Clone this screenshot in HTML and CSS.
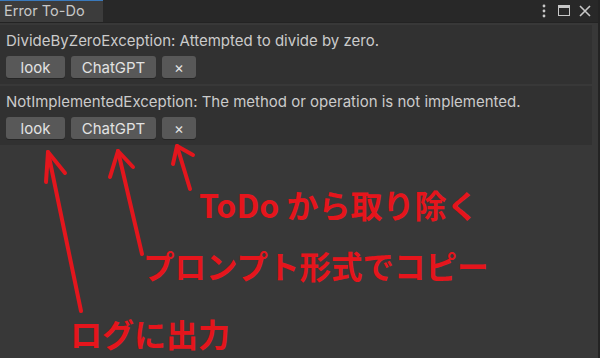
FILE: index.html
```html
<!DOCTYPE html>
<html lang="ja">
<head>
<meta charset="utf-8">
<link rel="stylesheet" href="styles.css">
</head>
<body>
<div class="window">
  <div class="titlebar">
    <div class="tab">Error To-Do</div>
    <div class="spacer"></div>
    <div class="win-icons">
      <svg class="ico" width="12" height="14" viewBox="0 0 12 14"><circle cx="6" cy="2" r="1.4" fill="#c8c8c8"/><circle cx="6" cy="7" r="1.4" fill="#c8c8c8"/><circle cx="6" cy="12" r="1.4" fill="#c8c8c8"/></svg>
      <svg class="ico" width="13" height="12" viewBox="0 0 13 12"><rect x="0.5" y="0.5" width="11" height="10" fill="none" stroke="#c8c8c8" stroke-width="1"/><rect x="0.5" y="0.5" width="11" height="2.5" fill="#c8c8c8"/></svg>
      <svg class="ico" width="12" height="12" viewBox="0 0 12 12"><path d="M1 1 L11 11 M11 1 L1 11" stroke="#c8c8c8" stroke-width="1.6"/></svg>
    </div>
  </div>
  <div class="content">
    <div class="row">
      <div class="msg">DivideByZeroException: Attempted to divide by zero.</div>
      <div class="btns">
        <button class="btn w-look">look</button>
        <button class="btn w-gpt">ChatGPT</button>
        <button class="btn w-x">×</button>
      </div>
    </div>
    <div class="row">
      <div class="msg">NotImplementedException: The method or operation is not implemented.</div>
      <div class="btns">
        <button class="btn w-look">look</button>
        <button class="btn w-gpt">ChatGPT</button>
        <button class="btn w-x">×</button>
      </div>
    </div>
  </div>
  <svg class="arrows" width="600" height="358" viewBox="0 0 600 358">
    <g fill="none" stroke="#e3161d" stroke-width="4" stroke-linecap="round" stroke-linejoin="round">
      <path d="M81 311 L48 152"/>
      <path d="M46 182 L48 152 L65 173"/>
      <path d="M142 254 L118 151"/>
      <path d="M110 177 L118 151 L133 167"/>
      <path d="M190 189 L177 146"/>
      <path d="M173 164 L177 146 L193 155"/>
    </g>
  </svg>
  <div class="note note-todo">ToDo から取り除く</div>
  <div class="note note-copy">プロンプト形式でコピー</div>
  <div class="note note-log">ログに出力</div>
</div>
</body>
</html>
```
FILE: styles.css
```css
html, body {
  margin: 0;
  padding: 0;
}
body {
  width: 600px;
  height: 358px;
  overflow: hidden;
  background: #383838;
  font-family: Inter, "Noto Sans", sans-serif;
}
.window {
  position: relative;
  width: 600px;
  height: 358px;
  background: #383838;
  border-right: 2px solid #232323;
  box-sizing: border-box;
}
.titlebar {
  display: flex;
  align-items: stretch;
  height: 22px;
  background: #282828;
  border-bottom: 1px solid #232323;
}
.tab {
  width: 103px;
  box-sizing: border-box;
  background: #3c3c3c;
  border-top: 1px solid #3a79bb;
  color: #c8c8c8;
  font-size: 14.5px;
  line-height: 20px;
  padding-left: 4px;
}
.spacer {
  flex: 1;
}
.win-icons {
  display: flex;
  align-items: center;
  gap: 8px;
  padding-right: 7px;
}
.ico {
  display: block;
}
.content {
  display: flex;
  flex-direction: column;
  gap: 2px;
  padding: 2px 6px 0 0;
}
.row {
  background: #313131;
  padding: 7px 6px 6px 6px;
}
.msg {
  color: #cbcbcb;
  font-size: 15px;
  line-height: 18px;
  white-space: nowrap;
}
.btns {
  display: flex;
  gap: 6px;
  margin-top: 6px;
}
.btn {
  height: 22px;
  border: none;
  border-radius: 3px;
  background: #585858;
  color: #e2e2e2;
  font-family: Inter, "Noto Sans", sans-serif;
  font-size: 15px;
  padding: 0;
  box-shadow: 0 1px 0 #252525;
}
.w-look { width: 59px; }
.w-gpt { width: 85px; }
.w-x { width: 34px; }
.arrows {
  position: absolute;
  left: 0;
  top: 0;
  pointer-events: none;
}
.note {
  position: absolute;
  color: #e5151c;
  font-family: "Noto Sans CJK JP", sans-serif;
  font-weight: 700;
  line-height: 1;
  white-space: nowrap;
}
.note-todo { left: 199px; top: 188px; font-size: 32px; }
.note-copy { left: 143px; top: 250px; font-size: 31.5px; }
.note-log { left: 70px; top: 317px; font-size: 32px; }
```
